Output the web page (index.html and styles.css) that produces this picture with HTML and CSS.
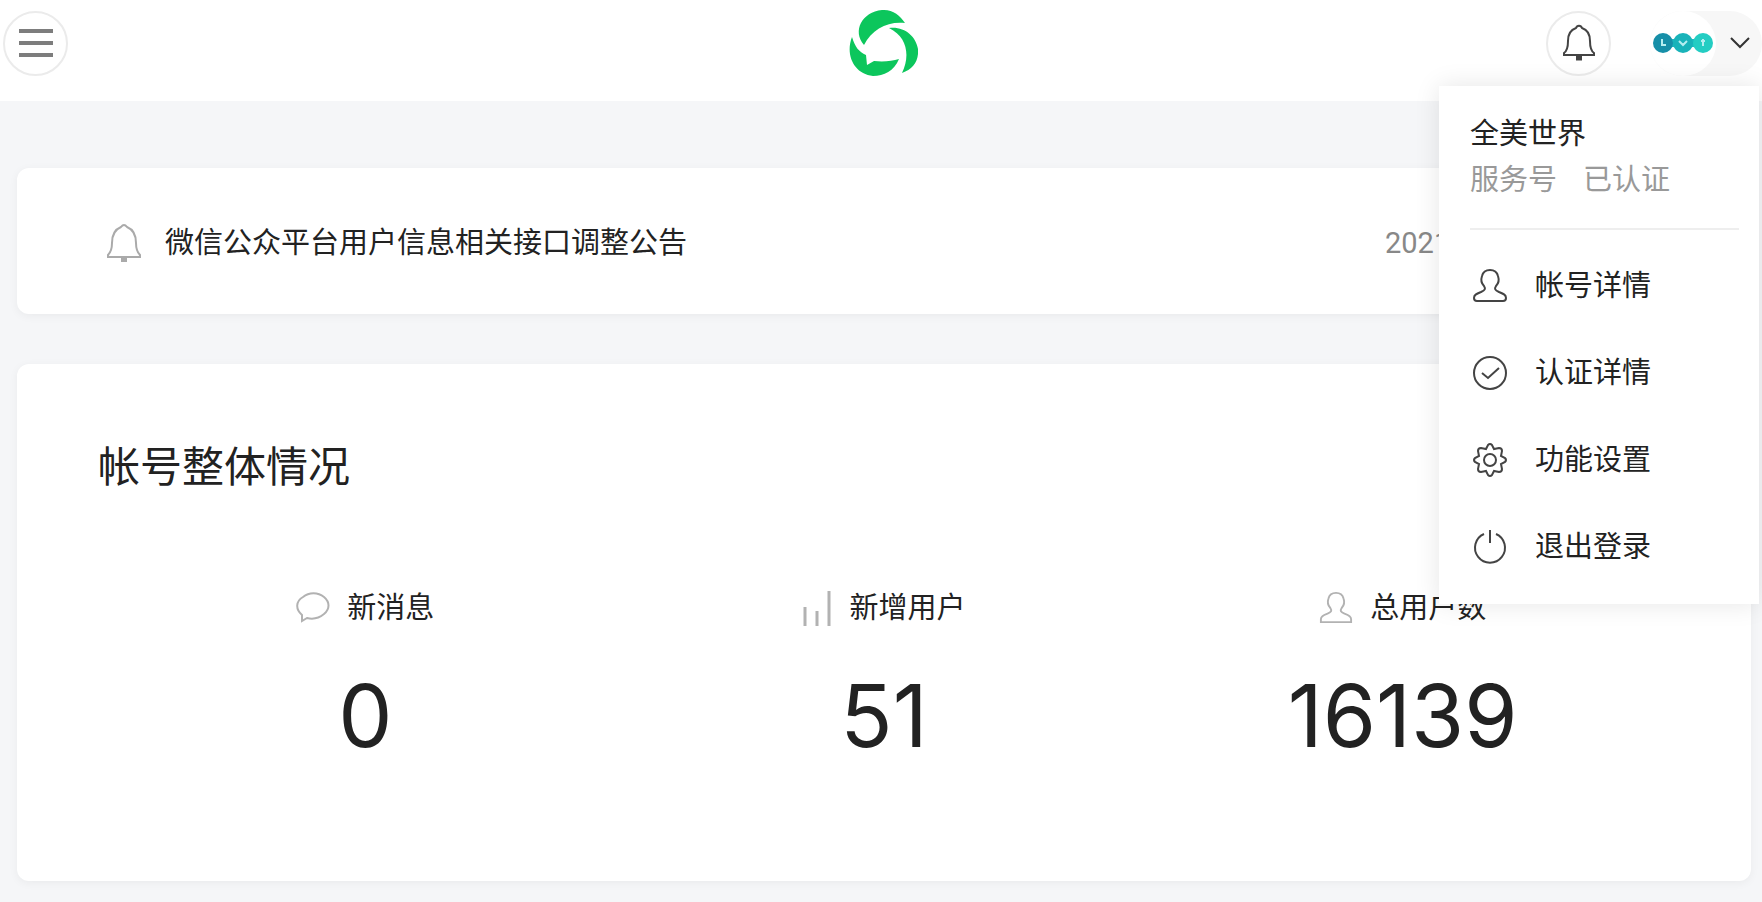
FILE: index.html
```html
<!DOCTYPE html>
<html lang="zh-CN">
<head>
    <meta charset="UTF-8">
    <meta name="viewport" content="width=device-width, initial-scale=1.0">
    <title>公众平台</title>
    <link rel="stylesheet" href="styles.css">
</head>
<body>
    <header class="header">
        <button class="round-btn" type="button" aria-label="菜单">
            <svg width="34" height="28" viewBox="0 0 34 28" stroke="#7d7d7d" stroke-width="4"><path d="M0 2h34M0 14h34M0 26h34"/></svg>
        </button>
        <a class="logo" href="#" aria-label="首页">
            <svg width="70" height="68" viewBox="0 0 70 68" fill="#0cc65c">
                <path d="M16 36C4 22 14 3 34 1C44 0 52 6 57 14C40 12 24 20 16 36Z"/>
                <path d="M41 19C56 17 68 27 70 40C71 52 65 60 54 64C62 48 60 28 41 19Z"/>
                <path d="M4 28C7 38 11 43 18 46L19 56L26 52C36 53 44 52 51 50C46 62 36 67 25 67C6 65 -3 46 4 28Z"/>
            </svg>
        </a>
        <div class="header-right">
            <button class="round-btn" type="button" aria-label="通知">
                <svg width="34" height="38" viewBox="0 0 34 38" fill="none" stroke="#444" stroke-width="2"><path d="M2 31V29C5 27 6 22 6 17C6 8 11 5 14 4C15 1 19 1 20 4C23 5 28 8 28 17C28 22 29 27 32 29V31Z"/><path d="M14 34h6" stroke-width="5"/></svg>
            </button>
            <button class="account-btn" type="button" aria-label="帐号" aria-expanded="true">
                <span class="avatar">
                    <svg width="60" height="20" viewBox="0 0 60 20">
                        <path d="M10 10h40" stroke="#1bbcc0" stroke-width="8"/>
                        <circle cx="10" cy="10" r="10" fill="#168fa8"/>
                        <circle cx="30" cy="10" r="10" fill="#19b3b9"/>
                        <circle cx="50" cy="10" r="10" fill="#24cdc3"/>
                        <path d="M9 6v6h4M26 8l4 4 4-4M50 6v7M48 8h4" fill="none" stroke="#b5eef0" stroke-width="2"/>
                    </svg>
                </span>
                <svg width="20" height="12" viewBox="0 0 20 12" fill="none" stroke="#333" stroke-width="2"><path d="M1 1l9 9 9-9"/></svg>
            </button>
        </div>

        <nav class="menu">
            <div class="menu-head">
                <div class="menu-name">全美世界</div>
                <div class="menu-type"><span>服务号</span><span>已认证</span></div>
            </div>
            <a class="menu-item" href="#">
                <svg width="36" height="36" viewBox="0 0 36 36"><path d="M12 18C9 15 9 11 10 8C11 4 14 2 18 2C22 2 25 4 26 8C27 11 27 15 24 18C22 21 23 22 27 24C32 26 34 27 34 30C34 32 33 33 31 33H5C3 33 2 32 2 30C2 27 4 26 9 24C13 22 14 21 12 18Z"/></svg>
                帐号详情
            </a>
            <a class="menu-item" href="#">
                <svg width="36" height="36" viewBox="0 0 36 36"><circle cx="18" cy="18" r="16"/><path d="M10 18l6 5 11-10"/></svg>
                认证详情
            </a>
            <a class="menu-item" href="#">
                <svg width="36" height="36" viewBox="0 0 36 36"><circle cx="18" cy="18" r="6"/><path d="M16 3Q18 1 20 3L22 7L27 6Q30 6 30 9L29 14L33 16Q35 18 33 20L29 22L30 27Q30 30 27 30L22 29L20 33Q18 35 16 33L14 29L9 30Q6 30 6 27L7 22L3 20Q1 18 3 16L7 14L6 9Q6 6 9 6L14 7Z"/></svg>
                功能设置
            </a>
            <a class="menu-item" href="#">
                <svg width="36" height="36" viewBox="0 0 36 36"><path d="M12 5A15 15 0 1 0 24 5M18 1V14"/></svg>
                退出登录
            </a>
        </nav>
    </header>

    <main class="content">
        <section class="card notice">
            <svg width="36" height="40" viewBox="0 0 36 40" fill="none" stroke="#aaa" stroke-width="2"><path d="M2 34V32C5 29 6 25 6 20C6 10 10 6 15 4Q18 0 21 4C26 6 30 10 30 20C30 25 31 29 34 32V34Z"/><path d="M15 37h6" stroke-width="4"/></svg>
            <a class="notice-title" href="#">微信公众平台用户信息相关接口调整公告</a>
            <time class="notice-date">2021-12-27</time>
        </section>

        <section class="card overview">
            <h2>帐号整体情况</h2>
            <div class="stats">
                <div class="stat">
                    <div class="stat-label">
                        <svg width="34" height="32" viewBox="0 0 34 32"><path d="M6 23C-1 17 0 9 7 5C13 0 22 0 28 5C34 10 34 17 28 22C22 27 15 27 11 26L6 29Z"/></svg>
                        新消息
                    </div>
                    <div class="stat-num">0</div>
                </div>
                <div class="stat">
                    <div class="stat-label">
                        <svg class="bars" width="30" height="36" viewBox="0 0 30 36"><path d="M3 17V36M15 21V36M27 1V36"/></svg>
                        新增用户
                    </div>
                    <div class="stat-num">51</div>
                </div>
                <div class="stat">
                    <div class="stat-label">
                        <svg width="34" height="34" viewBox="0 0 36 36"><path d="M12 18C9 15 9 11 10 8C11 4 14 2 18 2C22 2 25 4 26 8C27 11 27 15 24 18C22 21 23 22 27 24C32 26 34 27 34 30V33H2V30C2 27 4 26 9 24C13 22 14 21 12 18Z"/></svg>
                        总用户数
                    </div>
                    <div class="stat-num">16139</div>
                </div>
            </div>
        </section>
    </main>
</body>
</html>
```

FILE: styles.css
```css
* {
    box-sizing: border-box;
}
body {
    margin: 0;
    min-height: 100vh;
    font-family: Inter, "Noto Sans CJK SC", sans-serif;
    font-size: 29px;
    line-height: 40px;
    color: #222;
    background-color: #f5f6f8;
}
a {
    color: inherit;
    text-decoration: none;
}
button {
    padding: 0;
    border: none;
    background: none;
    cursor: pointer;
}
svg {
    display: block;
    flex-shrink: 0;
}
.header {
    position: relative;
    display: grid;
    grid-template-columns: 1fr auto 1fr;
    align-items: center;
    padding: 9px 0 24px 3px;
    background-color: #fff;
}
.round-btn {
    display: flex;
    align-items: center;
    justify-content: center;
    width: 65px;
    height: 65px;
    border: 2px solid #ebebeb;
    border-radius: 50%;
}
.header-right {
    display: flex;
    justify-content: flex-end;
    gap: 39px;
}
.account-btn {
    display: flex;
    align-items: center;
    gap: 14px;
    padding-right: 12px;
    border-radius: 33px;
    background-color: #f7f7f7;
}
.avatar {
    display: flex;
    align-items: center;
    justify-content: center;
    width: 66px;
    height: 65px;
    border-radius: 50%;
    background-color: #fff;
}
.menu {
    position: absolute;
    top: 86px;
    right: 3px;
    z-index: 1;
    width: 320px;
    padding: 28px 20px 14px 31px;
    background-color: #fff;
    box-shadow: 0 0 24px rgba(0,0,0,0.1);
}
.menu-head {
    padding-bottom: 28px;
    margin-bottom: 12px;
    border-bottom: 2px solid #eee;
}
.menu-type {
    display: flex;
    gap: 26px;
    margin-top: 6px;
    color: #999;
}
.menu-item {
    display: flex;
    align-items: center;
    gap: 27px;
    height: 87px;
    padding-left: 2px;
}
.menu-item svg {
    fill: none;
    stroke: #444;
    stroke-width: 2;
}
.content {
    padding: 67px 11px 21px 17px;
}
.card {
    background-color: #fff;
    border-radius: 12px;
    box-shadow: 0 2px 10px rgba(0,0,0,0.05);
}
.notice {
    display: flex;
    align-items: center;
    gap: 23px;
    height: 146px;
    margin-bottom: 50px;
    padding: 4px 81px 0 89px;
}
.notice-date {
    width: 285px;
    margin-left: auto;
    font-family: Roboto, sans-serif;
    color: #888;
}
.overview {
    padding: 73px 81px 117px;
}
h2 {
    margin: 0 0 91px;
    font-size: 42px;
    font-weight: 400;
    line-height: 60px;
}
.stats {
    display: grid;
    grid-template-columns: repeat(3, 1fr);
    padding: 0 8px;
}
.stat-label {
    display: flex;
    align-items: center;
    justify-content: center;
    gap: 17px;
}
.stat-label svg {
    fill: none;
    stroke: #b2b2b2;
    stroke-width: 2;
}
.stat-label .bars {
    stroke-width: 3;
}
.stat-num {
    margin-top: 40px;
    font-size: 86px;
    line-height: 96px;
    text-align: center;
}
```
